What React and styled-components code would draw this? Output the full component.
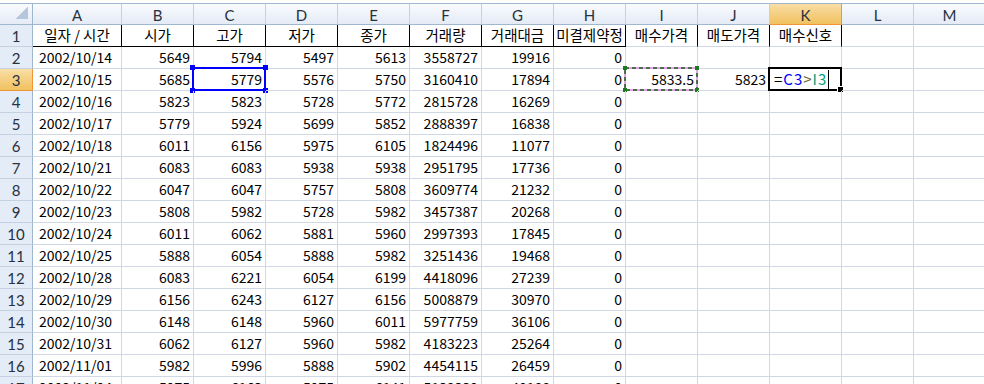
import React from "react";
import styled, { createGlobalStyle, css } from "styled-components";

const GlobalStyle = createGlobalStyle`
  html, body {
    margin: 0;
    padding: 0;
    background: #ffffff;
    overflow: hidden;
  }
`;

const COLS = ["A", "B", "C", "D", "E", "F", "G", "H", "I", "J", "K", "L", "M"];

const titles = ["일자 / 시간", "시가", "고가", "저가", "종가", "거래량", "거래대금", "미결제약정", "매수가격", "매도가격", "매수신호"];

const rows = [
  ["2002/10/14", 5649, 5794, 5497, 5613, 3558727, 19916, 0],
  ["2002/10/15", 5685, 5779, 5576, 5750, 3160410, 17894, 0],
  ["2002/10/16", 5823, 5823, 5728, 5772, 2815728, 16269, 0],
  ["2002/10/17", 5779, 5924, 5699, 5852, 2888397, 16838, 0],
  ["2002/10/18", 6011, 6156, 5975, 6105, 1824496, 11077, 0],
  ["2002/10/21", 6083, 6083, 5938, 5938, 2951795, 17736, 0],
  ["2002/10/22", 6047, 6047, 5757, 5808, 3609774, 21232, 0],
  ["2002/10/23", 5808, 5982, 5728, 5982, 3457387, 20268, 0],
  ["2002/10/24", 6011, 6062, 5881, 5960, 2997393, 17845, 0],
  ["2002/10/25", 5888, 6054, 5888, 5982, 3251436, 19468, 0],
  ["2002/10/28", 6083, 6221, 6054, 6199, 4418096, 27239, 0],
  ["2002/10/29", 6156, 6243, 6127, 6156, 5008879, 30970, 0],
  ["2002/10/30", 6148, 6148, 5960, 6011, 5977759, 36106, 0],
  ["2002/10/31", 6062, 6127, 5960, 5982, 4183223, 25264, 0],
  ["2002/11/01", 5982, 5996, 5888, 5902, 4454115, 26459, 0],
  ["2002/11/04", 5975, 6163, 5975, 6141, 5139339, 40188, 0],
];

const Sheet = styled.div`
  padding-top: 3px;
  width: 984px;
  height: 384px;
  overflow: hidden;
  box-sizing: border-box;
  font-family: "Noto Sans CJK KR", "Noto Sans", sans-serif;
  font-size: 14px;
  color: #000;
`;

const Row = styled.div`
  display: grid;
  grid-template-columns: 33px 89px repeat(12, 72px);
  height: ${(p) => p.$h}px;
`;

const headBg = css`
  background: linear-gradient(#f9fbfd, #e4ebf6);
`;
const activeHeadBg = css`
  background: linear-gradient(#f9dea6, #f1c15f);
`;

const Corner = styled.div`
  ${headBg};
  border-top: 1px solid #9eb6ce;
  border-right: 1px solid #9eb6ce;
  border-bottom: 1px solid #9eb6ce;
  box-sizing: border-box;
  display: flex;
  justify-content: flex-end;
  align-items: flex-end;
  padding: 0 4px 5px 0;
`;

const Triangle = styled.div`
  width: 12px;
  height: 12px;
  background: linear-gradient(to bottom right, transparent 50%, #b6c6db 50%);
`;

const ColHead = styled.div`
  ${(p) => (p.$active ? activeHeadBg : headBg)};
  border-top: 1px solid #9eb6ce;
  border-right: 1px solid ${(p) => (p.$active ? "#f29536" : "#c5d1e0")};
  border-bottom: 1px solid ${(p) => (p.$active ? "#f29536" : "#9eb6ce")};
  box-sizing: border-box;
  display: flex;
  align-items: center;
  justify-content: center;
  font-family: Lato, "Open Sans", sans-serif;
  font-size: 15px;
  color: #27313f;
  padding-top: 1px;
`;

const RowHead = styled.div`
  ${(p) => (p.$active ? activeHeadBg : css`background: #e4ecf7;`)};
  border-right: 1px solid ${(p) => (p.$active ? "#f29536" : "#9eb6ce")};
  border-bottom: 1px solid ${(p) => (p.$active ? "#f29536" : "#c5d1e0")};
  box-sizing: border-box;
  display: flex;
  align-items: center;
  justify-content: center;
  font-family: Lato, "Open Sans", sans-serif;
  font-size: 15px;
  color: #27313f;
`;

const Cell = styled.div`
  position: relative;
  box-sizing: border-box;
  border-right: 1px solid ${(p) => (p.$blackRight ? "#000" : "#d0d7e5")};
  border-bottom: 1px solid ${(p) => (p.$blackBottom ? "#000" : "#d0d7e5")};
  display: flex;
  align-items: flex-end;
  justify-content: ${(p) => (p.$align === "right" ? "flex-end" : p.$align === "center" ? "center" : "flex-start")};
  padding: 0 3px 1px 6px;
  line-height: 20px;
  white-space: nowrap;
  ${(p) => p.$tight && css`padding: 0 1px 1px 1px;`}
`;

const Title = styled.span`
  font-size: 14.5px;
`;

const RefBox = styled.div`
  position: absolute;
  left: -2px;
  top: -2px;
  right: -1px;
  bottom: -1px;
  border: 2px solid #0000ff;
  pointer-events: none;
`;

const Handle = styled.span`
  position: absolute;
  width: 5px;
  height: 5px;
  background: ${(p) => p.$color};
  ${(p) => (p.$v === "t" ? "top: -4px;" : "bottom: -4px;")}
  ${(p) => (p.$h === "l" ? "left: -4px;" : "right: -4px;")}
`;

const Marquee = styled.svg`
  position: absolute;
  left: -2px;
  top: -2px;
  overflow: visible;
  pointer-events: none;
`;

const ActiveBox = styled.div`
  position: absolute;
  left: -2px;
  top: -2px;
  right: -1px;
  bottom: -1px;
  border: 2px solid #000;
  pointer-events: none;
`;

const FillHandle = styled.span`
  position: absolute;
  right: -4px;
  bottom: -4px;
  width: 5px;
  height: 5px;
  background: #000;
  border: 1px solid #fff;
`;

const Formula = styled.span`
  display: flex;
  align-items: flex-end;
  font-size: 15px;
  line-height: 20px;
  margin-left: -2px;
  letter-spacing: 1px;
`;

const Caret = styled.span`
  display: inline-block;
  width: 1px;
  height: 19px;
  background: #000;
  margin-left: 1px;
`;

const Ref = styled.span`
  color: ${(p) => p.$color};
`;

const corners = [["t", "l"], ["t", "r"], ["b", "l"], ["b", "r"]];

function FormulaText() {
  return (
    <Formula>
      <span>=</span>
      <Ref $color="#0000ff">C3</Ref>
      <Ref $color="#6b6b2f">&gt;</Ref>
      <Ref $color="#00a080">I3</Ref>
      <Caret />
    </Formula>
  );
}

export default function App() {
  return (
    <>
      <GlobalStyle />
      <Sheet>
        <Row $h={22}>
          <Corner>
            <Triangle />
          </Corner>
          {COLS.map((c) => (
            <ColHead key={c} $active={c === "K"}>
              {c}
            </ColHead>
          ))}
        </Row>

        <Row $h={22}>
          <RowHead>1</RowHead>
          {COLS.map((c, i) => (
            <Cell
              key={c}
              $align="center"
              $tight
              $blackRight={i <= 10}
              $blackBottom={i <= 7}
            >
              <Title>{titles[i] || ""}</Title>
            </Cell>
          ))}
        </Row>

        {rows.map((r, ri) => {
          const n = ri + 2;
          const isThree = n === 3;
          return (
            <Row key={n} $h={22}>
              <RowHead $active={isThree}>{n}</RowHead>
              {COLS.map((c, i) => {
                let content = i < r.length ? String(r[i]) : "";
                if (isThree && c === "I") content = "5833.5";
                if (isThree && c === "J") content = "5823";
                const align = i === 0 ? "left" : "right";
                if (isThree && c === "K") {
                  return (
                    <Cell key={c} $align="left">
                      <FormulaText />
                      <ActiveBox>
                        <FillHandle />
                      </ActiveBox>
                    </Cell>
                  );
                }
                return (
                  <Cell key={c} $align={align}>
                    {content}
                    {isThree && c === "C" && (
                      <RefBox>
                        {corners.map(([v, h]) => (
                          <Handle key={v + h} $v={v} $h={h} $color="#0000ff" />
                        ))}
                      </RefBox>
                    )}
                    {isThree && c === "I" && (
                      <Marquee width="74" height="24">
                        <rect x="1" y="1" width="72" height="22" fill="none" stroke="#e58be5" strokeWidth="1.5" />
                        <rect x="1" y="1" width="72" height="22" fill="none" stroke="#1b5e1b" strokeWidth="1.5" strokeDasharray="4 3" />
                        <rect x="-1" y="-1" width="4" height="4" fill="#1f7a1f" />
                        <rect x="71" y="-1" width="4" height="4" fill="#1f7a1f" />
                        <rect x="-1" y="21" width="4" height="4" fill="#1f7a1f" />
                        <rect x="71" y="21" width="4" height="4" fill="#1f7a1f" />
                      </Marquee>
                    )}
                  </Cell>
                );
              })}
            </Row>
          );
        })}
      </Sheet>
    </>
  );
}
